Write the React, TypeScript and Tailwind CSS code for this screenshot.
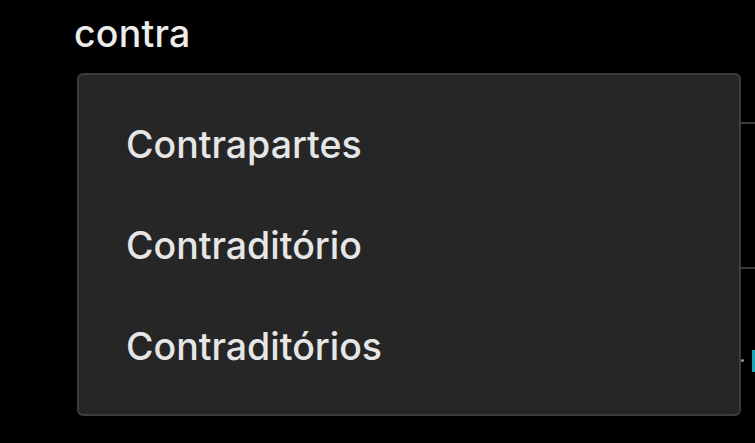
import React from "react";

export default function App() {
  const items = ["Contrapartes", "Contraditório", "Contraditórios"];
  return (
    <div
      className="w-[755px] h-[443px] bg-black overflow-hidden flex flex-col"
      style={{ fontFamily: "Inter, 'Noto Sans', sans-serif" }}
    >
      <div className="h-[73px] pl-[74px] pt-[12px] text-[37.5px] leading-[44px] text-[#ececec] font-medium tracking-[0.2px]">
        contra
      </div>
      <div className="flex">
        <div className="ml-[77px] w-[664px] h-[343px] bg-[#262626] border-2 border-[#3d3d3d] rounded-[6px] pt-[20px] flex flex-col">
          {items.map((t) => (
            <div
              key={t}
              className="h-[101px] flex items-center pl-[47px] text-[37.5px] text-[#e6e6e6] font-medium"
            >
              {t}
            </div>
          ))}
        </div>
        <div className="flex-1 flex flex-col">
          <div className="mt-[49px] h-[145px] border-t-2 border-[#3a3a3a]" />
          <div className="border-t-2 border-[#3a3a3a] flex items-start pt-[81px]">
            <div className="w-[3px] h-[3px] rounded-full bg-[#9a9a9a] mt-[9px] ml-[0px]" />
            <div className="ml-auto w-[3px] h-[22px] bg-[#19a6b6]" />
          </div>
        </div>
      </div>
    </div>
  );
}
